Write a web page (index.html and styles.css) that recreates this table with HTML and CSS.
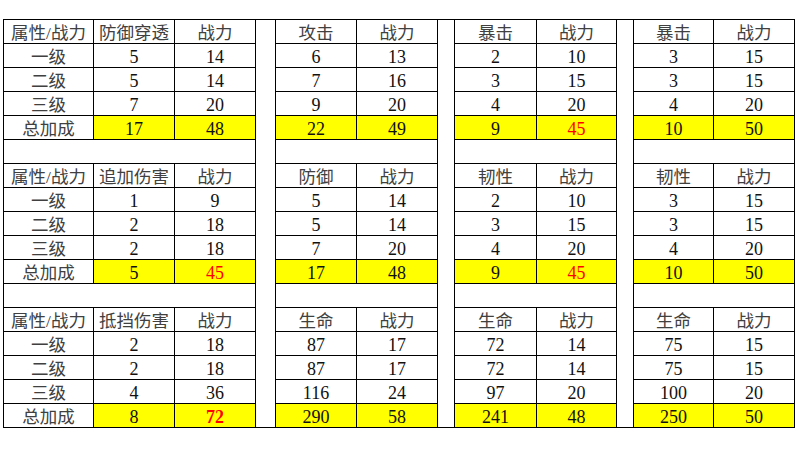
FILE: index.html
```html
<!DOCTYPE html>
<html lang="zh">
<head>
<meta charset="utf-8">
<title>属性战力表</title>
<link rel="stylesheet" href="styles.css">
</head>
<body>
<div class="sheet">
<table class="grid">
<colgroup>
<col class="c90"><col class="c81"><col class="c81">
<col class="c20">
<col class="c81"><col class="c81">
<col class="c17">
<col class="c82"><col class="c80">
<col class="c17">
<col class="c80"><col class="c81">
</colgroup>
<tbody>
<tr>
<td class="cn">属性/战力</td><td class="cn">防御穿透</td><td class="cn">战力</td>
<td class="gap" rowspan="17"></td>
<td class="cn">攻击</td><td class="cn">战力</td>
<td class="gap" rowspan="17"></td>
<td class="cn">暴击</td><td class="cn">战力</td>
<td class="gap" rowspan="17"></td>
<td class="cn">暴击</td><td class="cn">战力</td>
</tr>
<tr><td class="cn">一级</td><td>5</td><td>14</td><td>6</td><td>13</td><td>2</td><td>10</td><td>3</td><td>15</td></tr>
<tr><td class="cn">二级</td><td>5</td><td>14</td><td>7</td><td>16</td><td>3</td><td>15</td><td>3</td><td>15</td></tr>
<tr><td class="cn">三级</td><td>7</td><td>20</td><td>9</td><td>20</td><td>4</td><td>20</td><td>4</td><td>20</td></tr>
<tr><td class="cn">总加成</td><td class="hl">17</td><td class="hl">48</td><td class="hl">22</td><td class="hl">49</td><td class="hl">9</td><td class="hl red">45</td><td class="hl">10</td><td class="hl">50</td></tr>
<tr class="blank"><td colspan="3"></td><td colspan="2"></td><td colspan="2"></td><td colspan="2"></td></tr>

<tr>
<td class="cn">属性/战力</td><td class="cn">追加伤害</td><td class="cn">战力</td>
<td class="cn">防御</td><td class="cn">战力</td>
<td class="cn">韧性</td><td class="cn">战力</td>
<td class="cn">韧性</td><td class="cn">战力</td>
</tr>
<tr><td class="cn">一级</td><td>1</td><td>9</td><td>5</td><td>14</td><td>2</td><td>10</td><td>3</td><td>15</td></tr>
<tr><td class="cn">二级</td><td>2</td><td>18</td><td>5</td><td>14</td><td>3</td><td>15</td><td>3</td><td>15</td></tr>
<tr><td class="cn">三级</td><td>2</td><td>18</td><td>7</td><td>20</td><td>4</td><td>20</td><td>4</td><td>20</td></tr>
<tr><td class="cn">总加成</td><td class="hl">5</td><td class="hl red">45</td><td class="hl">17</td><td class="hl">48</td><td class="hl">9</td><td class="hl red">45</td><td class="hl">10</td><td class="hl">50</td></tr>
<tr class="blank"><td colspan="3"></td><td colspan="2"></td><td colspan="2"></td><td colspan="2"></td></tr>

<tr>
<td class="cn">属性/战力</td><td class="cn">抵挡伤害</td><td class="cn">战力</td>
<td class="cn">生命</td><td class="cn">战力</td>
<td class="cn">生命</td><td class="cn">战力</td>
<td class="cn">生命</td><td class="cn">战力</td>
</tr>
<tr><td class="cn">一级</td><td>2</td><td>18</td><td>87</td><td>17</td><td>72</td><td>14</td><td>75</td><td>15</td></tr>
<tr><td class="cn">二级</td><td>2</td><td>18</td><td>87</td><td>17</td><td>72</td><td>14</td><td>75</td><td>15</td></tr>
<tr><td class="cn">三级</td><td>4</td><td>36</td><td>116</td><td>24</td><td>97</td><td>20</td><td>100</td><td>20</td></tr>
<tr><td class="cn">总加成</td><td class="hl">8</td><td class="hl red bold">72</td><td class="hl">290</td><td class="hl">58</td><td class="hl">241</td><td class="hl">48</td><td class="hl">250</td><td class="hl">50</td></tr>
</tbody>
</table>
</div>
</body>
</html>
```

FILE: styles.css
```css
html, body {
  margin: 0;
  padding: 0;
  background: #ffffff;
}

.sheet {
  padding: 19px 0 0 3px;
}

.grid {
  border-collapse: collapse;
  table-layout: fixed;
  width: 791px;
  font-family: "Liberation Serif", "Noto Sans CJK SC", serif;
  font-size: 18px;
  color: #111111;
}

.c90 { width: 90px; }
.c81 { width: 81px; }
.c82 { width: 82px; }
.c80 { width: 80px; }
.c20 { width: 20px; }
.c17 { width: 17px; }

.grid td {
  border: 1px solid #000000;
  height: 21px;
  padding: 2px 0 0 0;
  text-align: center;
  vertical-align: middle;
  line-height: 20px;
  white-space: nowrap;
  overflow: hidden;
}

.grid td.cn {
  color: #404040;
  font-size: 17.5px;
}

.grid td.gap {
  border-left: none;
  border-right: none;
  border-top: 1px solid #000000;
  border-bottom: 1px solid #000000;
  padding: 0;
}

.grid td.hl {
  background: #ffff00;
}

.grid td.red {
  color: #ff0000;
}

.grid td.bold {
  font-weight: bold;
}
```
